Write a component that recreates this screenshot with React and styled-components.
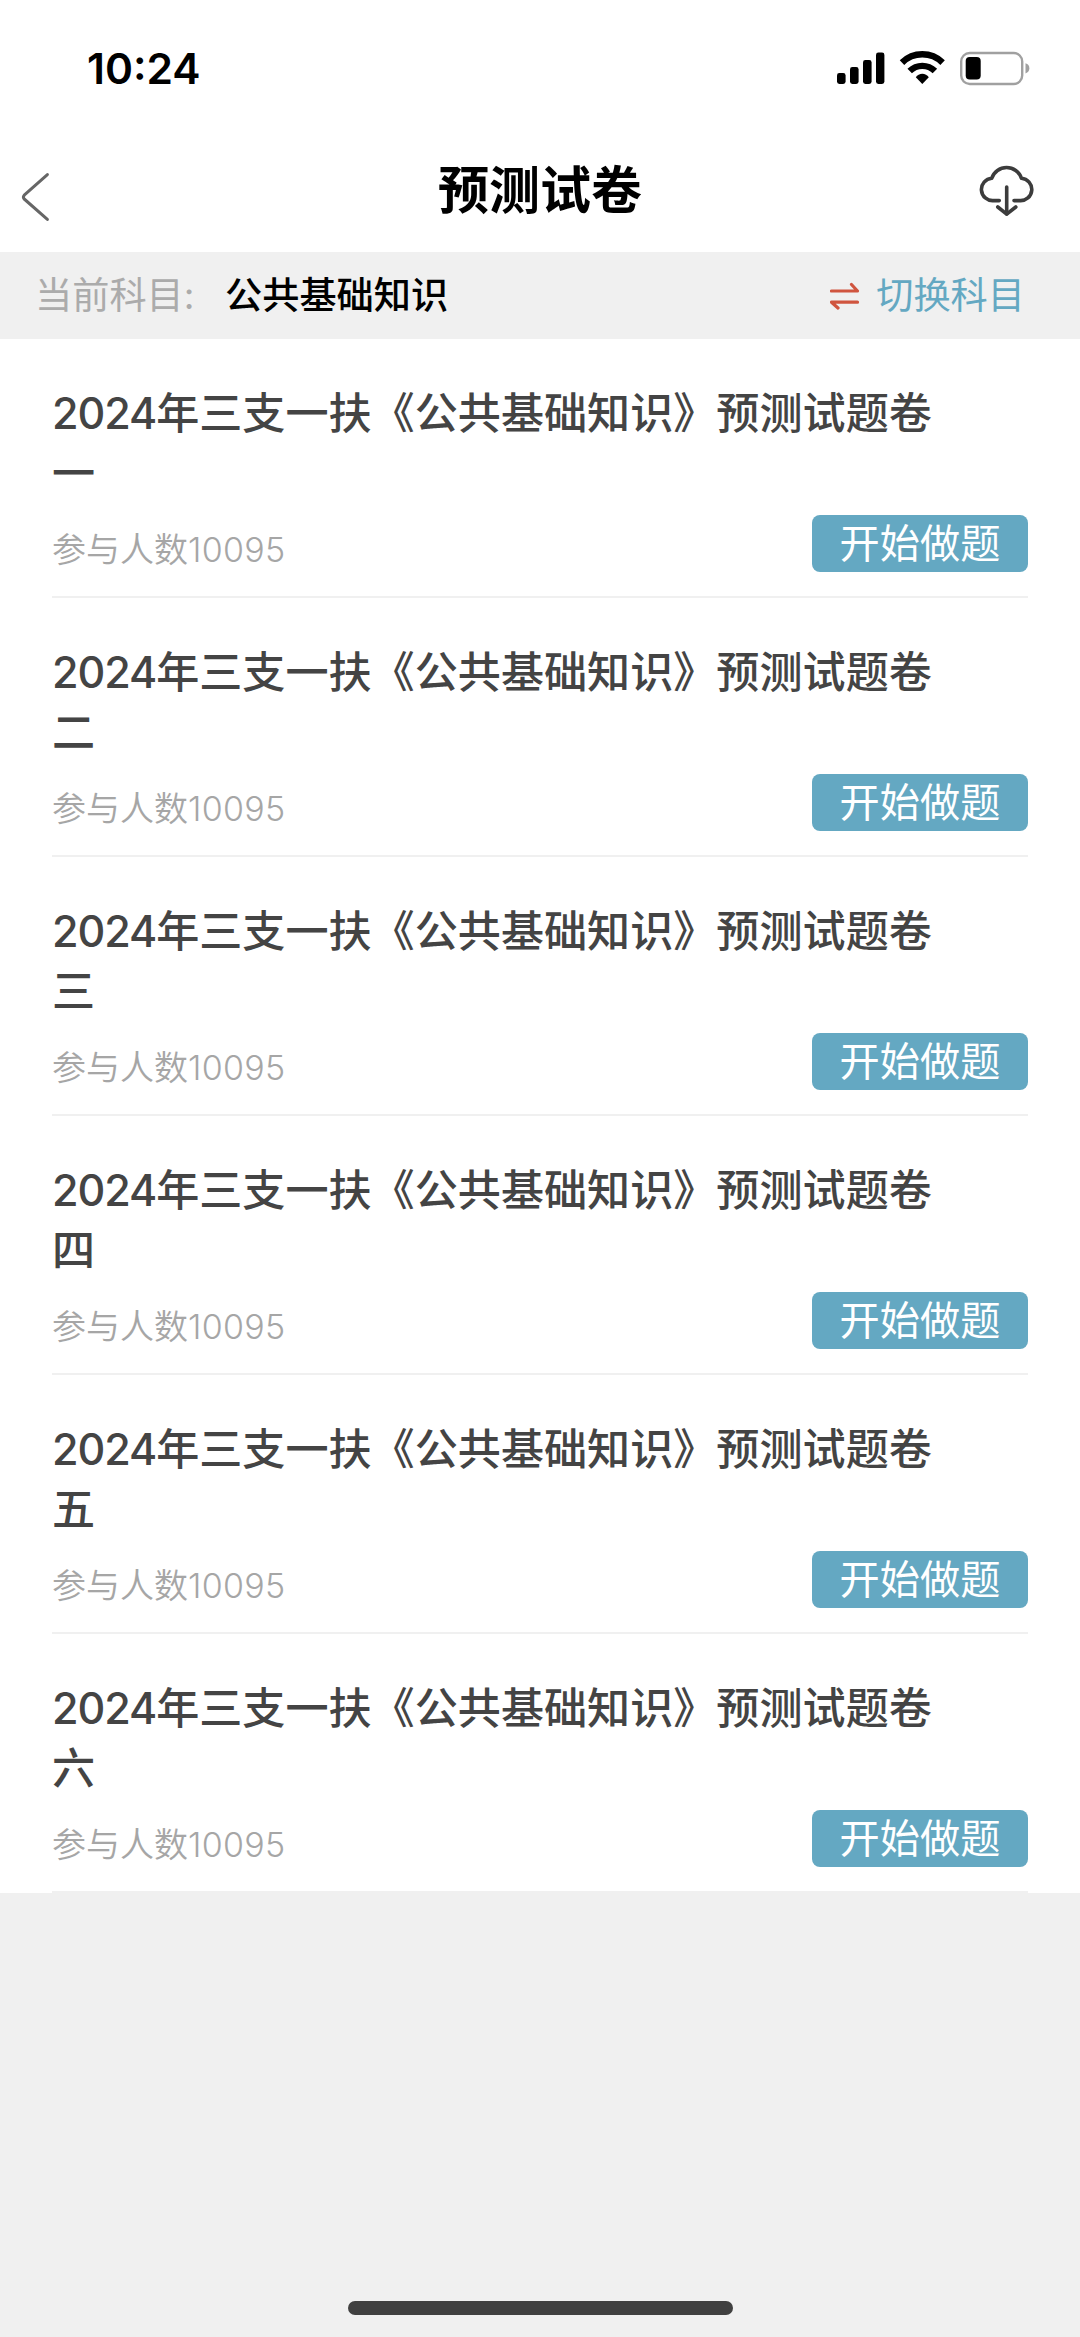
import React from "react";
import styled, { createGlobalStyle } from "styled-components";

const GlobalStyle = createGlobalStyle`
  * {
    box-sizing: border-box;
  }
  body {
    margin: 0;
    background-color: #f0f0f0;
    font-family: Inter, "Noto Sans CJK SC", sans-serif;
  }
  svg {
    display: block;
  }
`;

const PageStyles = styled.div`
  display: flex;
  flex-direction: column;
  width: 1080px;
  height: 2337px;
  background-color: #f0f0f0;
  overflow: hidden;
`;

const StatusBar = styled.div`
  display: flex;
  align-items: flex-start;
  justify-content: space-between;
  height: 130px;
  padding: 42px 50px 0 87px;
  background-color: #fff;
`;

const Time = styled.span`
  font-size: 42.5px;
  font-weight: 600;
  line-height: 54px;
  color: #000;
`;

const StatusIcons = styled.div`
  padding-top: 8px;
`;

const NavBar = styled.header`
  display: grid;
  grid-template-columns: 120px 1fr 120px;
  height: 122px;
  background-color: #fff;
`;

const NavButton = styled.button`
  display: flex;
  justify-content: ${props => (props.$end ? "flex-end" : "flex-start")};
  align-items: flex-start;
  padding: ${props => (props.$end ? "34px 45px 0 0" : "41px 0 0 20px")};
  border: none;
  background: none;
`;

const NavTitle = styled.h1`
  margin: 0;
  padding-top: 23px;
  text-align: center;
  font-size: 51px;
  font-weight: 700;
  line-height: 76px;
  color: #000;
`;

const SubjectBar = styled.div`
  display: flex;
  align-items: center;
  height: 87px;
  padding: 1px 55px 0 35px;
  font-size: 37.2px;
  line-height: 56px;
`;

const SubjectLabel = styled.span`
  width: 190px;
  color: #ababab;
`;

const SubjectName = styled.span`
  font-weight: 500;
  color: #000;
`;

const SwitchButton = styled.button`
  display: flex;
  align-items: center;
  gap: 16px;
  margin-left: auto;
  padding: 0;
  border: none;
  background: none;
  font: inherit;
  color: #64a8c2;
`;

const PaperList = styled.ul`
  margin: 0;
  padding: 0 52px;
  list-style: none;
  background-color: #fff;
`;

const PaperItem = styled.li`
  height: 259px;
  padding-top: 44px;
  border-bottom: 2px solid #f0f0f0;
`;

const PaperTitle = styled.h2`
  width: 900px;
  margin: 0;
  font-size: 43.1px;
  font-weight: 500;
  line-height: 60px;
  color: #444;
`;

const PaperFooter = styled.div`
  display: flex;
  justify-content: space-between;
  padding-top: 12px;
`;

const JoinCount = styled.span`
  padding-top: 11px;
  font-size: 34px;
  font-weight: 350;
  line-height: 48px;
  color: #a6a6a6;
`;

const StartButton = styled.button`
  width: 216px;
  height: 57px;
  padding: 0;
  border: none;
  border-radius: 8px;
  background-color: #64a8c2;
  font-family: inherit;
  font-size: 40.2px;
  line-height: 55px;
  color: #fff;
`;

const Digits = styled.span`
  letter-spacing: ${props => props.$spacing};
`;

const HomeIndicator = styled.div`
  width: 385px;
  height: 14px;
  margin: auto auto 22px 348px;
  border-radius: 7px;
  background-color: #404040;
`;

const DeviceStatus = () => (
  <svg width="194" height="36" viewBox="836 50 194 36">
    <rect x="837" y="73" width="8.6" height="11" rx="2.4" />
    <rect x="850" y="67" width="8.6" height="17" rx="2.4" />
    <rect x="863" y="60" width="8.6" height="24" rx="2.4" />
    <rect x="876" y="52.5" width="8.4" height="31.5" rx="2.4" />
    <g fill="none" stroke="#000" strokeWidth="6.4">
      <path d="M902 62.6A29 29 0 0 1 942.6 62.6" />
      <path d="M909.7 71A18 18 0 0 1 934.9 71" />
    </g>
    <path d="M922.3 84L915.8 77.2A8 8 0 0 1 928.8 77.2Z" />
    <rect x="961.2" y="53" width="61" height="31" rx="8.5" fill="none" stroke="#a0a0a0" strokeWidth="2.4" />
    <path d="M1025.5 63.2A5.3 5.3 0 0 1 1025.5 73.4Z" fill="#a0a0a0" />
    <rect x="965.7" y="57" width="15" height="22.5" rx="4" />
  </svg>
);

const BackIcon = () => (
  <svg width="32" height="52" viewBox="20 171 32 52" fill="none" stroke="#666" strokeWidth="3" strokeLinecap="round" strokeLinejoin="round">
    <path d="M47.4 174.6L24.2 195.2Q22.6 197 24.2 199L47.4 219.4" />
  </svg>
);

const CloudDownloadIcon = () => (
  <svg width="56" height="54" viewBox="979 164 56 54" fill="none" stroke="#3c3c3c" strokeWidth="3.6" strokeLinecap="round" strokeLinejoin="round">
    <path d="M999.3 200.6H993.5A11.2 11.2 0 0 1 991.8 178.2A15.6 15.6 0 0 1 1021.4 178.2A11.2 11.2 0 0 1 1019.7 200.6H1014" />
    <path d="M1006.7 187V214" />
    <path d="M997.8 207L1006.7 214.2L1015.8 207" />
  </svg>
);

const SwitchIcon = () => (
  <svg width="30" height="28" viewBox="831 281 30 28" fill="none" stroke="#d0553f" strokeWidth="3.2" strokeLinecap="round" strokeLinejoin="round">
    <path d="M832.5 290H858.5L852.5 283.5" />
    <path d="M858.5 301.2H832.5L839 307" />
  </svg>
);

const papers = ["一", "二", "三", "四", "五", "六"].map(number => ({
  number,
  year: 2024,
  joined: 10095,
}));

const Paper = ({ number, year, joined }) => (
  <PaperItem>
    <PaperTitle>
      <Digits $spacing="-1.1px">{year}</Digits>
      年三支一扶《公共基础知识》预测试题卷{number}
    </PaperTitle>
    <PaperFooter>
      <JoinCount>
        参与人数<Digits $spacing="0.3px">{joined}</Digits>
      </JoinCount>
      <StartButton type="button">开始做题</StartButton>
    </PaperFooter>
  </PaperItem>
);

const App = () => {
  return (
    <PageStyles>
      <GlobalStyle />
      <StatusBar>
        <Time>10:24</Time>
        <StatusIcons>
          <DeviceStatus />
        </StatusIcons>
      </StatusBar>
      <NavBar>
        <NavButton type="button" aria-label="返回">
          <BackIcon />
        </NavButton>
        <NavTitle>预测试卷</NavTitle>
        <NavButton type="button" aria-label="下载" $end>
          <CloudDownloadIcon />
        </NavButton>
      </NavBar>
      <SubjectBar>
        <SubjectLabel>当前科目:</SubjectLabel>
        <SubjectName>公共基础知识</SubjectName>
        <SwitchButton type="button">
          <SwitchIcon />
          切换科目
        </SwitchButton>
      </SubjectBar>
      <PaperList>
        {papers.map(paper => (
          <Paper key={paper.number} {...paper} />
        ))}
      </PaperList>
      <HomeIndicator />
    </PageStyles>
  );
};

export default App;
